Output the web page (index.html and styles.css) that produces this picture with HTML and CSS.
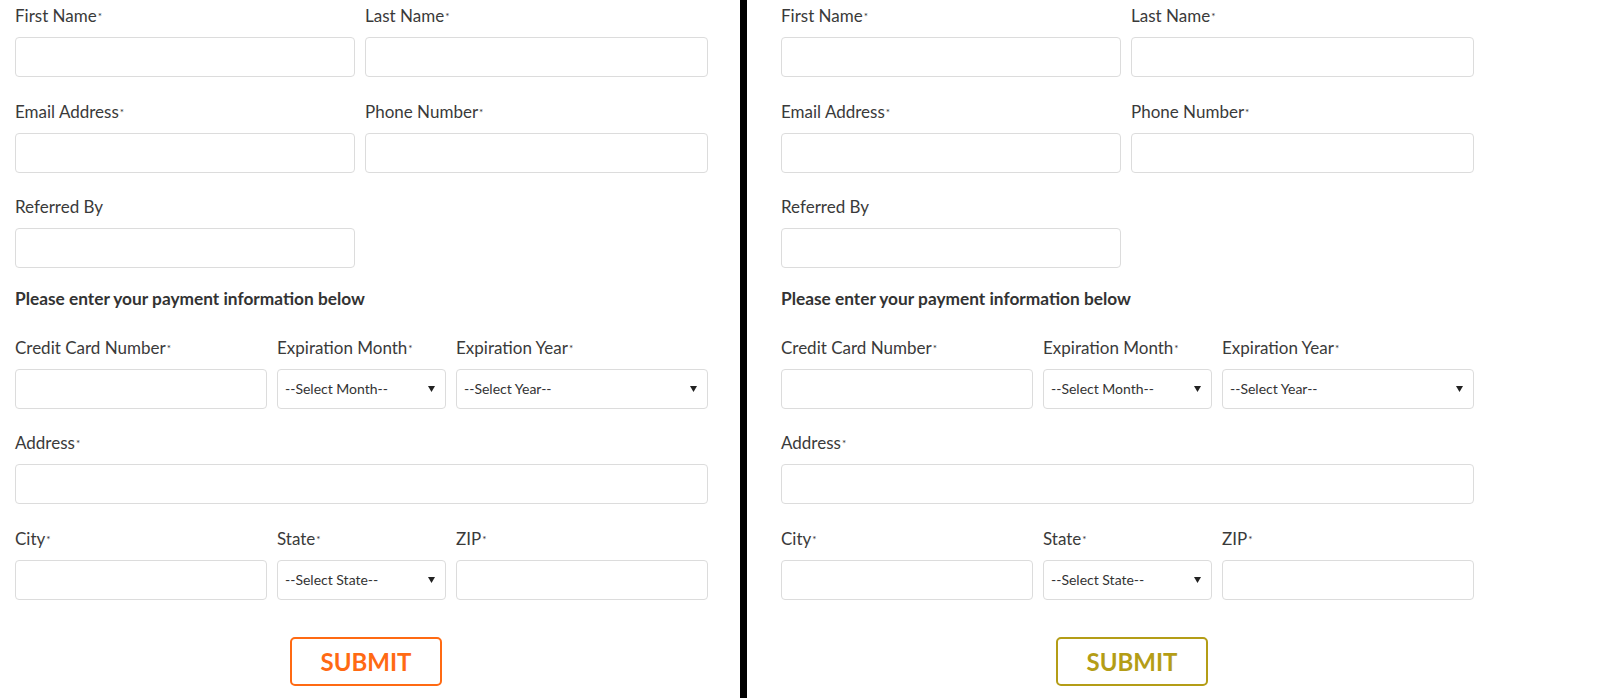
FILE: index.html
```html
<!DOCTYPE html>
<html>
<head>
<meta charset="utf-8">
<link rel="stylesheet" href="styles.css">
</head>
<body>
<div class="page">
  <section class="panel panel-left">
    <form class="form">
      <div class="row two">
        <div class="field"><label class="label">First Name<span class="req">*</span></label><input class="input" type="text"></div>
        <div class="field"><label class="label">Last Name<span class="req">*</span></label><input class="input" type="text"></div>
      </div>
      <div class="row two">
        <div class="field"><label class="label">Email Address<span class="req">*</span></label><input class="input" type="text"></div>
        <div class="field"><label class="label">Phone Number<span class="req">*</span></label><input class="input" type="text"></div>
      </div>
      <div class="row two">
        <div class="field"><label class="label">Referred By</label><input class="input" type="text"></div>
      </div>
      <h3 class="section-title">Please enter your payment information below</h3>
      <div class="row three">
        <div class="field"><label class="label">Credit Card Number<span class="req">*</span></label><input class="input" type="text"></div>
        <div class="field"><label class="label">Expiration Month<span class="req">*</span></label>
          <div class="select-wrap"><select class="select"><option>--Select Month--</option></select><svg class="arrow" width="7" height="6" viewBox="0 0 7 6"><path d="M0 0H7L3.5 6Z" fill="#222"/></svg></div></div>
        <div class="field"><label class="label">Expiration Year<span class="req">*</span></label>
          <div class="select-wrap"><select class="select"><option>--Select Year--</option></select><svg class="arrow" width="7" height="6" viewBox="0 0 7 6"><path d="M0 0H7L3.5 6Z" fill="#222"/></svg></div></div>
      </div>
      <div class="row one">
        <div class="field"><label class="label">Address<span class="req">*</span></label><input class="input" type="text"></div>
      </div>
      <div class="row three">
        <div class="field"><label class="label">City<span class="req">*</span></label><input class="input" type="text"></div>
        <div class="field"><label class="label">State<span class="req">*</span></label>
          <div class="select-wrap"><select class="select"><option>--Select State--</option></select><svg class="arrow" width="7" height="6" viewBox="0 0 7 6"><path d="M0 0H7L3.5 6Z" fill="#222"/></svg></div></div>
        <div class="field"><label class="label">ZIP<span class="req">*</span></label><input class="input" type="text"></div>
      </div>
      <div class="actions"><button type="button" class="submit submit-orange">SUBMIT</button></div>
    </form>
  </section>
  <div class="divider"></div>
  <section class="panel panel-right">
    <form class="form">
      <div class="row two">
        <div class="field"><label class="label">First Name<span class="req">*</span></label><input class="input" type="text"></div>
        <div class="field"><label class="label">Last Name<span class="req">*</span></label><input class="input" type="text"></div>
      </div>
      <div class="row two">
        <div class="field"><label class="label">Email Address<span class="req">*</span></label><input class="input" type="text"></div>
        <div class="field"><label class="label">Phone Number<span class="req">*</span></label><input class="input" type="text"></div>
      </div>
      <div class="row two">
        <div class="field"><label class="label">Referred By</label><input class="input" type="text"></div>
      </div>
      <h3 class="section-title">Please enter your payment information below</h3>
      <div class="row three">
        <div class="field"><label class="label">Credit Card Number<span class="req">*</span></label><input class="input" type="text"></div>
        <div class="field"><label class="label">Expiration Month<span class="req">*</span></label>
          <div class="select-wrap"><select class="select"><option>--Select Month--</option></select><svg class="arrow" width="7" height="6" viewBox="0 0 7 6"><path d="M0 0H7L3.5 6Z" fill="#222"/></svg></div></div>
        <div class="field"><label class="label">Expiration Year<span class="req">*</span></label>
          <div class="select-wrap"><select class="select"><option>--Select Year--</option></select><svg class="arrow" width="7" height="6" viewBox="0 0 7 6"><path d="M0 0H7L3.5 6Z" fill="#222"/></svg></div></div>
      </div>
      <div class="row one">
        <div class="field"><label class="label">Address<span class="req">*</span></label><input class="input" type="text"></div>
      </div>
      <div class="row three">
        <div class="field"><label class="label">City<span class="req">*</span></label><input class="input" type="text"></div>
        <div class="field"><label class="label">State<span class="req">*</span></label>
          <div class="select-wrap"><select class="select"><option>--Select State--</option></select><svg class="arrow" width="7" height="6" viewBox="0 0 7 6"><path d="M0 0H7L3.5 6Z" fill="#222"/></svg></div></div>
        <div class="field"><label class="label">ZIP<span class="req">*</span></label><input class="input" type="text"></div>
      </div>
      <div class="actions"><button type="button" class="submit submit-gold">SUBMIT</button></div>
    </form>
  </section>
</div>
</body>
</html>
```

FILE: styles.css
```css
* { box-sizing: border-box; }
html, body { margin: 0; padding: 0; background: #fff; }
body {
  font-family: Lato, "Open Sans", "Liberation Sans", sans-serif;
  color: #333;
  width: 1600px;
  height: 698px;
  overflow: hidden;
}
.page {
  display: flex;
  height: 698px;
}
.panel {
  padding-top: 2px;
}
.panel-left {
  width: 740px;
  padding-left: 15px;
}
.panel-right {
  flex: 1;
  padding-left: 34px;
}
.divider {
  width: 7px;
  background: #000;
  height: 100%;
}
.form {
  width: 693px;
  margin: 0;
}
.row {
  display: grid;
  column-gap: 10px;
  margin-bottom: 20.5px;
}
.row.two { grid-template-columns: 340px 1fr; }
.row.three { grid-template-columns: 252px 1fr 252px; }
.row.one { grid-template-columns: 1fr; }
.field {
  display: flex;
  flex-direction: column;
  min-width: 0;
}
.label {
  display: block;
  margin-top: 4px;
  margin-bottom: 11px;
  font-size: 17px;
  line-height: 20px;
  height: 20px;
  color: #3a3a3a;
  white-space: nowrap;
}
.req {
  font-size: 10px;
  color: #333;
  margin-left: 1px;
  vertical-align: 2px;
}
.input, .select {
  display: block;
  width: 100%;
  height: 40px;
  border: 1px solid #dcdcdc;
  border-radius: 4px;
  background: #fff;
  margin: 0;
  outline: none;
}
.select-wrap {
  position: relative;
}
.select {
  appearance: none;
  -webkit-appearance: none;
  font-family: Lato, "Open Sans", "Liberation Sans", sans-serif;
  font-size: 14px;
  color: #333;
  padding: 0 24px 0 7px;
}
.arrow {
  position: absolute;
  right: 11px;
  top: 17px;
  pointer-events: none;
}
.section-title {
  margin: 0 0 25px 0;
  font-size: 17.3px;
  line-height: 20px;
  font-weight: 700;
  color: #333;
}
.actions {
  display: flex;
  padding-top: 16.5px;
  padding-left: 275px;
}
.submit {
  width: 152px;
  height: 49px;
  background: #fff;
  border-radius: 5px;
  font-family: Lato, "Open Sans", "Liberation Sans", sans-serif;
  font-weight: 700;
  font-size: 24px;
  padding: 0;
  cursor: pointer;
}
.submit-orange {
  border: 2px solid #ff6a13;
  color: #ff6a13;
}
.submit-gold {
  border: 2px solid #b49d16;
  color: #b49d16;
}
```
